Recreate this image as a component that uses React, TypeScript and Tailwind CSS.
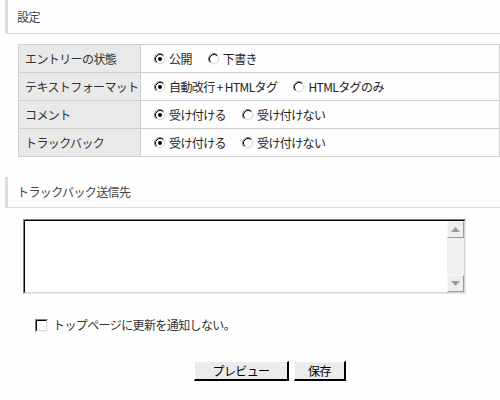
import React from "react";

const font = { fontFamily: "'Noto Sans CJK JP', 'Liberation Sans', sans-serif" };

function Radio({ checked }: { checked?: boolean }) {
  return (
    <svg width="12" height="12" viewBox="0 0 12 12" className="shrink-0">
      <circle cx="6" cy="6" r="5" fill="#fff" />
      <path d="M2.11 9.89 A5.5 5.5 0 0 1 9.89 2.11" stroke="#808080" strokeWidth="1" fill="none" />
      <path d="M9.89 2.11 A5.5 5.5 0 0 1 2.11 9.89" stroke="#f2f2f2" strokeWidth="1" fill="none" />
      <path d="M2.82 9.18 A4.5 4.5 0 0 1 9.18 2.82" stroke="#000" strokeWidth="1" fill="none" />
      <path d="M9.18 2.82 A4.5 4.5 0 0 1 2.82 9.18" stroke="#d8d8d8" strokeWidth="1" fill="none" />
      {checked && <circle cx="6" cy="6" r="2" fill="#000" />}
    </svg>
  );
}

function Option({ checked, label }: { checked?: boolean; label: string }) {
  return (
    <label className="flex items-center gap-[3px] mr-[16px] whitespace-nowrap">
      <Radio checked={checked} />
      <span>{label}</span>
    </label>
  );
}

function Heading({ children }: { children: React.ReactNode }) {
  return (
    <div className="ml-[5px] flex items-center border-l-[3px] border-b border-l-[#dcdcdc] border-b-[#dedede] pl-[9px] text-[12px] text-[#444]">
      {children}
    </div>
  );
}

const rows: { label: string; options: [string, boolean][] }[] = [
  { label: "エントリーの状態", options: [["公開", true], ["下書き", false]] },
  { label: "テキストフォーマット", options: [["自動改行 + HTMLタグ", true], ["HTMLタグのみ", false]] },
  { label: "コメント", options: [["受け付ける", true], ["受け付けない", false]] },
  { label: "トラックバック", options: [["受け付ける", true], ["受け付けない", false]] },
];

function ScrollButton({ up }: { up?: boolean }) {
  return (
    <div className="h-[17px] w-[17px] flex items-center justify-center bg-[#eeeeee] border border-t-[#fafafa] border-l-[#fafafa] border-r-[#9a9a9a] border-b-[#9a9a9a]">
      <svg width="9" height="5" viewBox="0 0 9 5">
        {up ? <polygon points="0,5 9,5 4.5,0" fill="#9a9a9a" /> : <polygon points="0,0 9,0 4.5,5" fill="#9a9a9a" />}
      </svg>
    </div>
  );
}

export default function App() {
  return (
    <div className="w-[500px] h-[400px] overflow-hidden bg-[#fdfefd] text-[#222] tracking-[-0.6px]" style={font}>
      <div className="h-[34px]">
        <Heading>
          <div className="h-[33px] flex items-center">設定</div>
        </Heading>
      </div>

      {/* settings table */}
      <table className="ml-[18px] mt-[10px] w-[482px] border-collapse text-[12px] leading-[14px]">
        <tbody>
          {rows.map((r) => (
            <tr key={r.label} className="h-[28px]">
              <td className="w-[122px] whitespace-nowrap border border-[#cfcfcf] bg-[#e9e9e9] pl-[6px] text-[#333]">
                {r.label}
              </td>
              <td className="border border-[#cfcfcf] pl-[13px]">
                <div className="flex items-center">
                  {r.options.map(([l, c]) => (
                    <Option key={l} label={l} checked={c} />
                  ))}
                </div>
              </td>
            </tr>
          ))}
        </tbody>
      </table>

      <div className="mt-[20px]">
        <Heading>
          <div className="h-[30px] flex items-center">トラックバック送信先</div>
        </Heading>
      </div>

      {/* textarea */}
      <div className="ml-[23px] mt-[11px] w-[443px] h-[75px] flex border border-t-[#808080] border-l-[#808080] border-r-[#e6e6e6] border-b-[#e6e6e6]">
        <div className="flex flex-1 border border-t-black border-l-black border-r-[#d8d8d8] border-b-[#d8d8d8] bg-white">
          <textarea className="flex-1 resize-none outline-none bg-white" />
          <div className="w-[17px] flex flex-col bg-[#f1f1f1]">
            <ScrollButton up />
            <div className="flex-1" />
            <ScrollButton />
          </div>
        </div>
      </div>

      {/* notify checkbox */}
      <label className="ml-[35px] mt-[22px] flex items-center gap-[5px] text-[12px] text-[#333]">
        <div className="w-[13px] h-[13px] border border-t-[#808080] border-l-[#808080] border-r-[#f4f4f4] border-b-[#f4f4f4]">
          <div className="w-full h-full bg-white border border-t-black border-l-black border-r-[#dcdcdc] border-b-[#dcdcdc]" />
        </div>
        <span>トップページに更新を通知しない。</span>
      </label>

      {/* buttons */}
      <div className="ml-[194px] mt-[27px] flex gap-[5px] text-[12px] text-black">
        <button className="w-[95px] h-[20px] bg-[#ebebeb] border-t border-l border-t-white border-l-white border-r-2 border-b-2 border-r-black border-b-black leading-none">
          プレビュー
        </button>
        <button className="w-[52px] h-[20px] bg-[#ebebeb] border-t border-l border-t-white border-l-white border-r-2 border-b-2 border-r-black border-b-black leading-none">
          保存
        </button>
      </div>
    </div>
  );
}
